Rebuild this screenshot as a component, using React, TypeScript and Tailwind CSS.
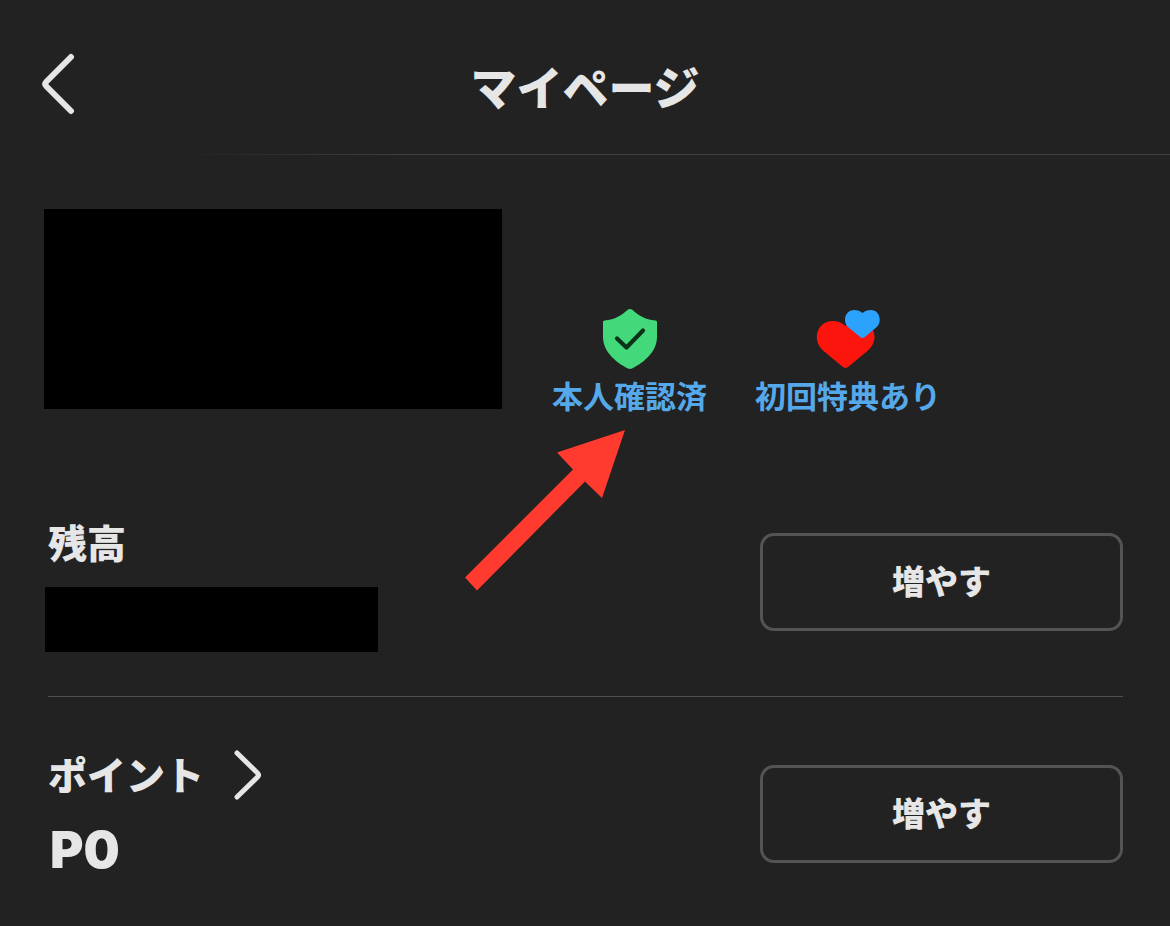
import type { ReactNode } from "react";

function BackIcon() {
  return (
    <svg width="40" height="64" viewBox="0 0 40 64" fill="none" aria-hidden="true">
      <path
        d="M31 5 6.5 29.5Q4 32 6.5 34.5L31 59"
        stroke="#e6e6e6"
        strokeWidth="6"
        strokeLinecap="round"
        strokeLinejoin="round"
      />
    </svg>
  );
}

function ForwardIcon() {
  return (
    <svg width="32" height="52" viewBox="0 0 32 52" fill="none" aria-hidden="true">
      <path
        d="M5 4 25.5 24Q27.5 26 25.5 28L5 48"
        stroke="#e6e6e6"
        strokeWidth="5"
        strokeLinecap="round"
        strokeLinejoin="round"
      />
    </svg>
  );
}

function ShieldIcon() {
  return (
    <svg width="56" height="60" viewBox="0 0 56 60" fill="none" aria-hidden="true">
      <path
        d="M26 .6Q28 -.4 30 .6C36 6 43 11 53.5 11.5Q55 11.8 55 13V28C55 42 43 53 30 59.5Q28 60.3 26 59.5C13 53 1 42 1 28V13Q1 11.8 2.5 11.5C13 11 20 6 26 .6Z"
        fill="#43d97b"
      />
      <path
        d="M15 29.5 24.5 38.5 41 21.5"
        stroke="#0b3219"
        strokeWidth="4.2"
        strokeLinecap="round"
        strokeLinejoin="round"
      />
    </svg>
  );
}

function HeartsIcon() {
  return (
    <svg width="64" height="60" viewBox="0 0 64 60" fill="none" aria-hidden="true">
      <path
        d="M29.5 59Q28 59 26.3 57.6L7 41.5C3 38 .8 33 .8 28C.8 18.500 8 12 16.5 12C22 12 26 13.500 29.5 17C33 13.500 37 12 42.5 12C51 12 58.5 18.500 58.5 28C58.500 33 56 38 52 41.500L32.7 57.6Q31 59 29.500 59Z"
        fill="#fc150c"
      />
      <path
        d="M46.5 29Q45.5 29 44.500 28.200L32.500 18.500C30 16.500 29 13.800 29 10.800C29 5 33 1 38 1C41.5 1 44.5 2 46.5 4C48.5 2 51.5 1 55 1C60 1 63.7 5 63.7 10.8C63.7 13.800 62.700 16.500 60.200 18.500L48.500 28.200Q47.5 29 46.5 29Z"
        fill="#2ba2fb"
      />
    </svg>
  );
}

function PointerArrow() {
  return (
    <svg
      className="pointer-events-none absolute top-[121px] -left-[88px]"
      width="162"
      height="162"
      viewBox="0 0 162 162"
      aria-hidden="true"
    >
      <path d="M161 0 93 22.5 109 39.5 1 147.5 13 160.5 121 51.5 138 68Z" fill="#ff3b30" />
    </svg>
  );
}

function Badge({ icon, label, children }: { icon: ReactNode; label: string; children?: ReactNode }) {
  return (
    <a href="#" className="relative flex shrink-0 flex-col items-center gap-1.5">
      {icon}
      <span className="text-[31px] leading-10 font-bold whitespace-nowrap text-[#55a9ea]">{label}</span>
      {children}
    </a>
  );
}

function AccountRow({ heading, value }: { heading: ReactNode; value: ReactNode }) {
  return (
    <section className="flex items-start justify-between pt-[54px] pb-11">
      <div className="flex flex-col gap-5">
        {heading}
        {value}
      </div>
      <button
        type="button"
        className="mt-3.5 h-[98px] w-[363px] rounded-[14px] border-3 border-[#545454] pb-0.5 text-[33px] font-black"
      >
        増やす
      </button>
    </section>
  );
}

export default function App() {
  return (
    <div className="min-h-screen bg-[#222222] font-['Noto_Sans_CJK_JP',sans-serif] text-[#e6e6e6]">
      <header>
        <div className="grid h-[154px] grid-cols-[1fr_auto_1fr] items-center px-10">
          <button type="button" aria-label="戻る" className="w-10 pt-3.5">
            <BackIcon />
          </button>
          <h1 className="pt-4 text-[46px] leading-[64px] font-black">マイページ</h1>
        </div>
        <div className="h-px bg-linear-to-r from-[#222222] from-15% to-[#404040] to-35%" />
      </header>

      <main>
        <section className="flex items-start pt-[54px] pl-11 pb-[50px]">
          <div className="h-[200px] w-[458px] shrink-0 bg-black" />
          <div className="flex gap-12 pt-[100px] pl-[50px]">
            <Badge icon={<ShieldIcon />} label="本人確認済">
              <PointerArrow />
            </Badge>
            <Badge icon={<HeartsIcon />} label="初回特典あり" />
          </div>
        </section>

        <div className="mr-[47px] ml-12 divide-y divide-[#505050]">
          <AccountRow
            heading={<h2 className="pb-1 text-[39px] leading-11 font-black">残高</h2>}
            value={<div className="-ml-[3px] h-[65px] w-[333px] bg-black" />}
          />
          <AccountRow
            heading={
              <h2 className="text-[39px] leading-11 font-black">
                <a href="#" className="flex h-12 items-center gap-7">
                  <span className="pb-1">ポイント</span>
                  <ForwardIcon />
                </a>
              </h2>
            }
            value={<p className="pl-0.5 font-[Inter,sans-serif] text-[51px] leading-[62px] font-black">P0</p>}
          />
        </div>
      </main>
    </div>
  );
}
